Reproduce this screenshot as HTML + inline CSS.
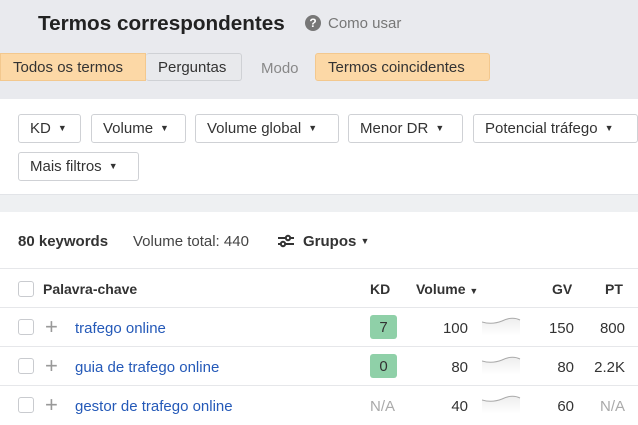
<!DOCTYPE html>
<html><head><meta charset="utf-8"><style>
*{margin:0;padding:0;box-sizing:border-box}
body{width:638px;height:425px;overflow:hidden;font-family:"Liberation Sans",Arial,sans-serif;background:#fff;position:relative;color:#333;font-size:15px}
.a{position:absolute;white-space:nowrap}
.hdr{left:0;top:0;width:638px;height:99px;background:#e9eaee}
.band{left:0;top:194px;width:638px;height:18px;background:#eef0f2;border-top:1px solid #e2e4e8}
.btn{position:absolute;height:28px;display:flex;align-items:center;font-size:15px;padding:0 12px;border-radius:3px;color:#333;padding-top:1px}
.f{position:absolute;height:29px;line-height:28px;border:1px solid #cfd1d5;border-radius:3px;background:#fff;padding:0 11px;color:#333;font-size:15px}
.f:after{content:"▼";font-size:9px;margin-left:7px;position:relative;top:-2px}
.line{position:absolute;left:0;width:638px;height:1px;background:#e6e7ea}
.cb{position:absolute;left:18px;width:16px;height:16px;border:1px solid #c9cbcf;border-radius:3px;background:#fff}
.plus{position:absolute;left:45px;font-size:22px;color:#999;line-height:20px}
.kw{position:absolute;left:75px;color:#2459b8;font-size:15px}
.r{position:absolute;text-align:right;font-size:15px;color:#333}
.kd{position:absolute;left:370px;width:27px;height:24px;background:#8fd0a8;border-radius:3px;text-align:center;line-height:25px;color:#333}
</style></head><body>
<div class="a hdr"></div>
<div class="a" style="left:38px;top:12px;font-size:20.7px;font-weight:bold;color:#222">Termos correspondentes</div>
<div class="a" style="left:305px;top:15px;width:16px;height:16px;border-radius:50%;background:#777;color:#fff;font-size:12px;font-weight:bold;text-align:center;line-height:16px">?</div>
<div class="a" style="left:328px;top:15px;font-size:15px;color:#777">Como usar</div>
<div class="btn" style="left:0;top:53px;width:146px;background:#fcd8a6;border:1px solid #f3c88e;border-radius:0">Todos os termos</div>
<div class="btn" style="left:146px;top:53px;width:96px;background:#e8e9ec;border:1px solid #cfd1d5;border-left:none">Perguntas</div>
<div class="a" style="left:261px;top:60px;color:#888">Modo</div>
<div class="btn" style="left:315px;top:53px;width:175px;background:#fcd8a6;border:1px solid #f3c88e">Termos coincidentes</div>

<div class="f" style="left:18px;top:114px;width:63px">KD</div>
<div class="f" style="left:91px;top:114px;width:95px">Volume</div>
<div class="f" style="left:195px;top:114px;width:144px">Volume global</div>
<div class="f" style="left:348px;top:114px;width:115px">Menor DR</div>
<div class="f" style="left:473px;top:114px;width:165px">Potencial tráfego</div>
<div class="f" style="left:18px;top:152px;width:121px">Mais filtros</div>
<div class="a band"></div>

<div class="a" style="left:18px;top:233px;font-weight:bold;color:#333">80 keywords</div>
<div class="a" style="left:133px;top:233px;color:#444">Volume total: 440</div>
<svg class="a" style="left:277px;top:234px" width="18" height="14" viewBox="0 0 18 14"><g stroke="#333" stroke-width="2" fill="none"><line x1="1" y1="4" x2="17" y2="4"/><line x1="1" y1="10" x2="17" y2="10"/><circle cx="11" cy="4" r="2.2" fill="#fff"/><circle cx="6" cy="10" r="2.2" fill="#fff"/></g></svg>
<div class="a" style="left:303px;top:233px;font-weight:bold;color:#333">Grupos <span style="font-size:9px;position:relative;top:-2px">▼</span></div>
<div class="line" style="top:268px"></div>

<div class="cb" style="top:281px"></div>
<div class="a" style="left:43px;top:281px;font-weight:bold;font-size:14px">Palavra-chave</div>
<div class="a" style="left:370px;top:281px;font-weight:bold;font-size:14px">KD</div>
<div class="a" style="left:416px;top:281px;font-weight:bold;font-size:14px">Volume <span style="font-size:9px">▼</span></div>
<div class="a" style="left:552px;top:281px;font-weight:bold;font-size:14px">GV</div>
<div class="a" style="left:605px;top:281px;font-weight:bold;font-size:14px">PT</div>
<div class="line" style="top:307px"></div>

<div class="cb" style="top:319px"></div><div class="plus" style="top:317px">+</div>
<div class="kw" style="top:320px">trafego online</div>
<div class="kd" style="top:315px">7</div>
<div class="r" style="left:420px;width:48px;top:320px">100</div>
<div class="r" style="left:530px;width:44px;top:320px">150</div>
<div class="r" style="left:580px;width:45px;top:320px">800</div>
<div class="line" style="top:346px"></div>

<div class="cb" style="top:358px"></div><div class="plus" style="top:356px">+</div>
<div class="kw" style="top:359px">guia de trafego online</div>
<div class="kd" style="top:354px">0</div>
<div class="r" style="left:420px;width:48px;top:359px">80</div>
<div class="r" style="left:530px;width:44px;top:359px">80</div>
<div class="r" style="left:580px;width:45px;top:359px">2.2K</div>
<div class="line" style="top:385px"></div>

<div class="cb" style="top:397px"></div><div class="plus" style="top:395px">+</div>
<div class="kw" style="top:398px">gestor de trafego online</div>
<div class="a" style="left:370px;top:398px;color:#aaa">N/A</div>
<div class="r" style="left:420px;width:48px;top:398px">40</div>
<div class="r" style="left:530px;width:44px;top:398px">60</div>
<div class="r" style="left:580px;width:45px;top:398px;color:#aaa">N/A</div>

<svg class="a" style="left:482px;top:316px" width="40" height="100" viewBox="0 0 40 100">
<defs><linearGradient id="g" x1="0" y1="0" x2="0" y2="1"><stop offset="0" stop-color="#eee"/><stop offset="1" stop-color="#fff"/></linearGradient></defs>
<g fill="url(#g)" stroke="none"><path d="M0 6 Q10 9 20 5 Q30 0 38 4 L38 20 L0 20Z"/><path transform="translate(0,39)" d="M0 6 Q10 9 20 5 Q30 0 38 4 L38 20 L0 20Z"/><path transform="translate(0,78)" d="M0 6 Q10 9 20 5 Q30 0 38 4 L38 20 L0 20Z"/></g>
<g fill="none" stroke="#aaa" stroke-width="1"><path d="M0 6 Q10 9 20 5 Q30 0 38 4"/><path transform="translate(0,39)" d="M0 6 Q10 9 20 5 Q30 0 38 4"/><path transform="translate(0,78)" d="M0 6 Q10 9 20 5 Q30 0 38 4"/></g>
</svg>
</body></html>
